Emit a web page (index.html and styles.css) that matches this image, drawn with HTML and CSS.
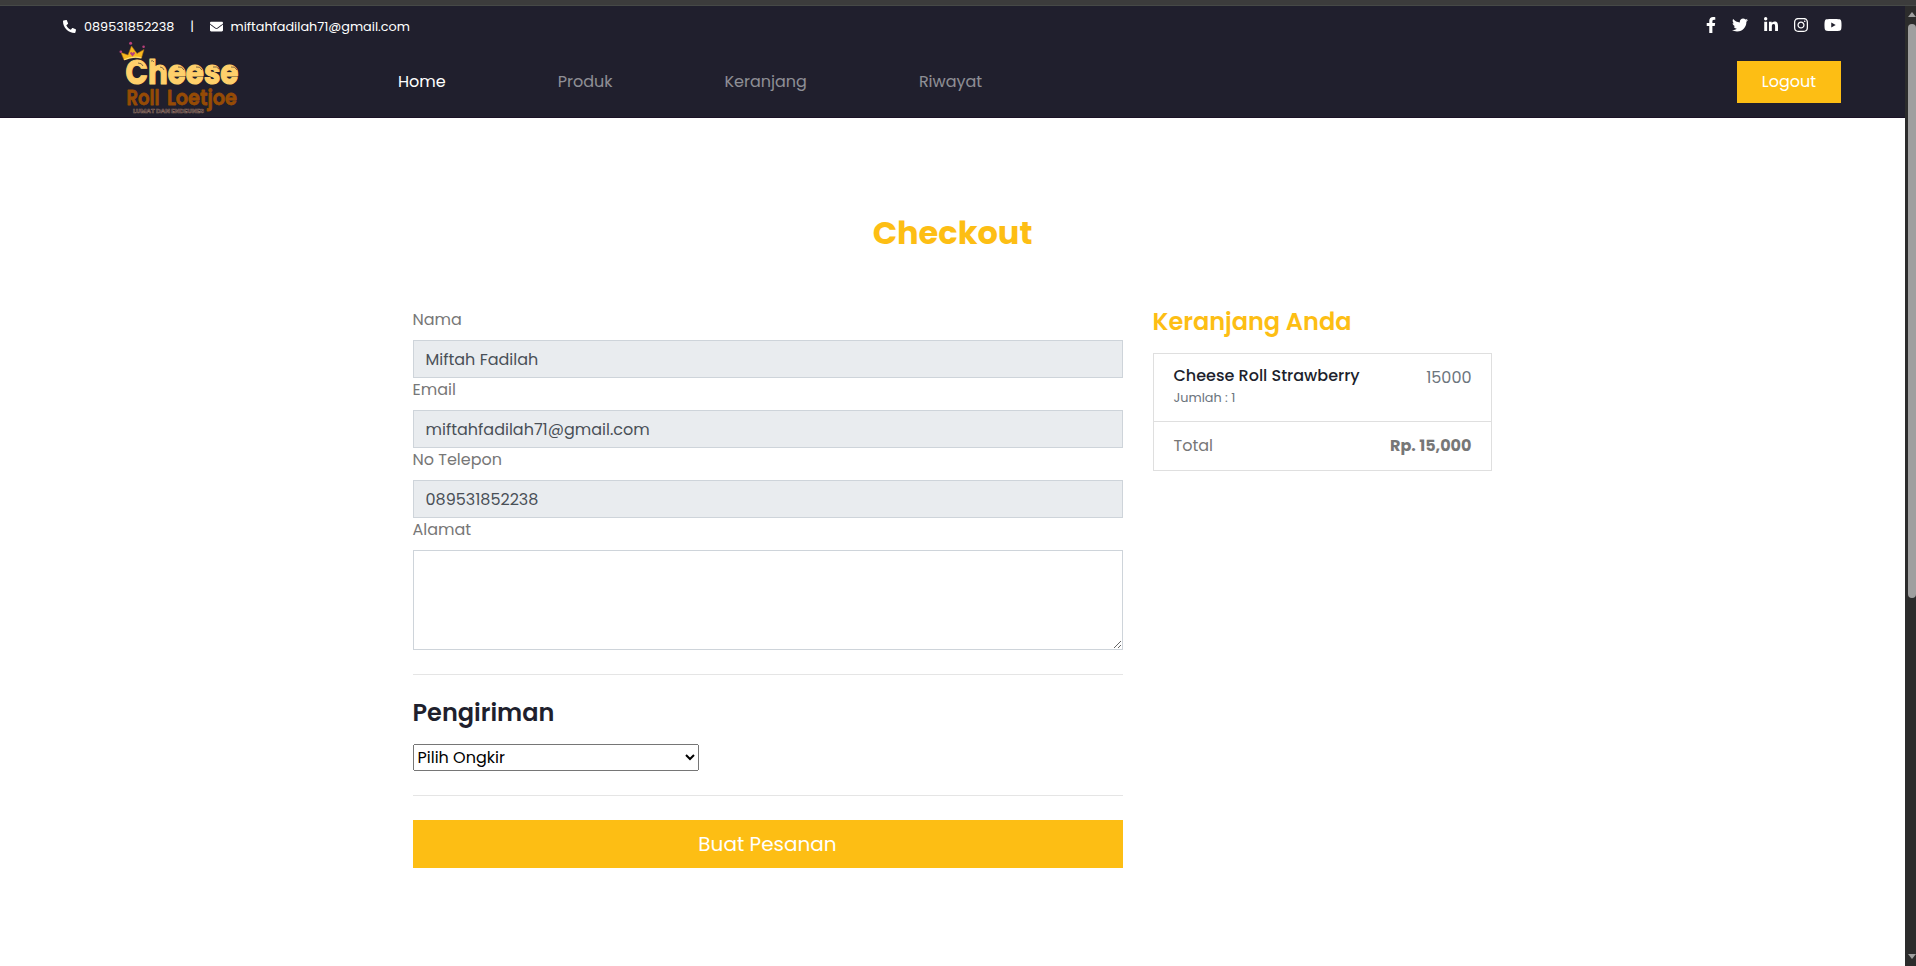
FILE: index.html
```html
<!DOCTYPE html>
<html lang="id">
<head>
<meta charset="utf-8">
<title>Checkout - Cheese Roll Loetjoe</title>
<link rel="stylesheet" href="styles.css">
</head>
<body>
<div class="window-edge"></div>
<div class="viewport">
  <div class="page">
    <header class="header">
      <div class="topbar">
        <div class="contact">
          <svg class="icon-sm" viewBox="0 0 512 512"><path d="M493.4 24.6l-104-24c-11.300-2.600-22.900 3.300-27.500 13.900l-48 112c-4.200 9.800-1.400 21.300 6.900 28l60.600 49.600c-36 76.700-98.900 140.500-177.200 177.200l-49.600-60.600c-6.800-8.300-18.200-11.100-28-6.900l-112 48C3.900 366.500-2 378.100.6 389.400l24 104C27.100 504.200 36.700 512 48 512c256.100 0 464-207.500 464-464 0-11.200-7.700-20.900-18.600-23.400z" transform="matrix(-1 0 0 1 512 0)"/></svg>
          <span>089531852238</span>
          <span class="divider">|</span>
          <svg class="icon-sm" viewBox="0 0 512 512"><path d="M502.300 190.800c3.900-3.100 9.700-.2 9.700 4.700V400c0 26.500-21.500 48-48 48H48c-26.500 0-48-21.500-48-48V195.600c0-5 5.700-7.800 9.700-4.700 22.400 17.400 52.100 39.500 154.100 113.600 21.100 15.400 56.700 47.800 92.200 47.600 35.700.3 72-32.800 92.300-47.600 102-74.100 131.600-96.300 154-113.700zM256 320c23.200.4 56.600-29.200 73.400-41.400 132.700-96.300 142.800-104.700 173.400-128.700 5.800-4.500 9.200-11.500 9.200-18.900v-19c0-26.500-21.500-48-48-48H48c-26.500 0-48 21.500-48 48v19c0 7.400 3.400 14.300 9.200 18.900 30.600 23.900 40.700 32.400 173.400 128.700 16.800 12.200 50.200 41.800 73.400 41.400z"/></svg>
          <span>miftahfadilah71@gmail.com</span>
        </div>
        <div class="social">
          <svg viewBox="0 0 320 512" width="10"><path d="M279.140 288l14.220-92.660h-88.910v-60.130c0-25.350 12.420-50.060 52.240-50.060h40.420V6.260S260.430 0 225.360 0c-73.220 0-121.080 44.380-121.080 124.720v70.620H22.890V288h81.390v224h100.170V288z"/></svg>
          <svg viewBox="0 0 512 512" width="16"><path d="M459.370 151.716c.325 4.548.325 9.097.325 13.645 0 138.720-105.583 298.558-298.558 298.558-59.452 0-114.680-17.219-161.137-47.106 8.447.974 16.568 1.299 25.340 1.299 49.055 0 94.213-16.568 130.274-44.832-46.132-.975-84.792-31.188-98.112-72.772 6.498.974 12.995 1.624 19.818 1.624 9.421 0 18.843-1.300 27.614-3.573-48.081-9.747-84.143-51.980-84.143-102.985v-1.299c13.969 7.797 30.214 12.670 47.431 13.319-28.264-18.843-46.781-51.005-46.781-87.391 0-19.492 5.197-37.360 14.294-52.954 51.655 63.675 129.300 105.258 216.365 109.807-1.624-7.797-2.599-15.918-2.599-24.040 0-57.828 46.782-104.934 104.934-104.934 30.213 0 57.502 12.670 76.670 33.137 23.715-4.548 46.456-13.320 66.599-25.340-7.798 24.366-24.366 44.833-46.132 57.827 21.117-2.273 41.584-8.122 60.426-16.243-14.292 20.791-32.161 39.308-52.628 54.253z"/></svg>
          <svg viewBox="0 0 448 512" width="14"><path d="M100.280 448H7.400V148.900h92.880zM53.790 108.100C24.090 108.100 0 83.500 0 53.800a53.790 53.790 0 0 1 107.580 0c0 29.700-24.100 54.300-53.790 54.300zM447.900 448h-92.680V302.400c0-34.700-.7-79.200-48.290-79.200-48.290 0-55.690 37.700-55.690 76.700V448h-92.780V148.900h89.080v40.800h1.300c12.400-23.500 42.690-48.300 87.880-48.300 94 0 111.280 61.900 111.280 142.300V448z"/></svg>
          <svg viewBox="0 0 448 512" width="14"><path d="M224.100 141c-63.600 0-114.900 51.300-114.900 114.900s51.300 114.900 114.900 114.900S339 319.500 339 255.900 287.700 141 224.100 141zm0 189.600c-41.100 0-74.700-33.500-74.700-74.700s33.500-74.700 74.700-74.700 74.700 33.500 74.700 74.700-33.600 74.700-74.700 74.700zm146.400-194.300c0 14.900-12 26.800-26.800 26.800-14.900 0-26.800-12-26.800-26.800s12-26.800 26.800-26.800 26.800 12 26.800 26.800zm76.100 27.200c-1.700-35.900-9.900-67.700-36.200-93.900-26.200-26.200-58-34.400-93.900-36.200-37-2.100-147.900-2.100-184.900 0-35.800 1.700-67.600 9.900-93.900 36.100s-34.400 58-36.200 93.900c-2.100 37-2.100 147.900 0 184.900 1.700 35.900 9.900 67.700 36.200 93.900s58 34.400 93.900 36.200c37 2.100 147.900 2.100 184.900 0 35.900-1.700 67.700-9.900 93.900-36.200 26.200-26.200 34.400-58 36.200-93.900 2.100-37 2.100-147.800 0-184.800zM398.800 388c-7.800 19.600-22.900 34.700-42.600 42.600-29.500 11.700-99.500 9-132.100 9s-102.700 2.600-132.100-9c-19.600-7.800-34.700-22.900-42.600-42.600-11.700-29.500-9-99.500-9-132.100s-2.600-102.700 9-132.100c7.800-19.600 22.900-34.700 42.600-42.600 29.500-11.700 99.500-9 132.100-9s102.700-2.600 132.100 9c19.600 7.800 34.700 22.900 42.600 42.600 11.700 29.500 9 99.500 9 132.100s2.700 102.700-9 132.100z"/></svg>
          <svg viewBox="0 0 576 512" width="18"><path d="M549.655 124.083c-6.281-23.650-24.787-42.276-48.284-48.597C458.781 64 288 64 288 64S117.220 64 74.629 75.486c-23.497 6.322-42.003 24.947-48.284 48.597-11.412 42.867-11.412 132.305-11.412 132.305s0 89.438 11.412 132.305c6.281 23.650 24.787 41.500 48.284 47.821C117.220 448 288 448 288 448s170.780 0 213.371-11.486c23.497-6.321 42.003-24.171 48.284-47.821 11.412-42.867 11.412-132.305 11.412-132.305s0-89.438-11.412-132.305zm-317.510 213.508V175.185l142.739 81.205-142.739 81.201z"/></svg>
        </div>
      </div>
      <nav class="navbar">
        <svg class="logo" viewBox="0 0 124 76">
          <text class="logo-cheese" x="6.500" y="43" textLength="113" lengthAdjust="spacingAndGlyphs">Cheese</text>
          <path class="logo-shine" d="M19 22q4 0 5 3M32 20q2-1 3 1M41 26q3 0 4 3M59 26q4-1 6 3M77 26q4-1 6 3M94 26q4-1 6 2M112 26q4-1 6 3"/>
          <text class="logo-roll" x="7.500" y="64" textLength="33" lengthAdjust="spacingAndGlyphs">Roll</text>
          <text class="logo-roll" x="48" y="64" textLength="70" lengthAdjust="spacingAndGlyphs">Loetjoe</text>
          <text class="logo-tag" x="14" y="72" textLength="71" lengthAdjust="spacingAndGlyphs">LUMAT DAN ENDEUNES</text>
          <path class="crown" d="M5 19L2 11.500L9 14L12.500 5L18 12.500L25 8.500L22.500 17Q13 15 5 19Z"/>
          <path class="crown-band" d="M5.200 18.700Q13 14.800 22.400 16.800"/>
          <path class="gem" d="M13.500 15.500L11 12.500Q12 10 13.500 12Q15.500 10 16 12.500Z"/>
          <g class="gem"><circle cx="1.800" cy="10.800" r="1.300"/><circle cx="11.600" cy="2.200" r="1.500"/><circle cx="24.600" cy="5.800" r="1.300"/></g>
        </svg>
        <div class="nav-links">
          <a class="nav-link active">Home</a>
          <a class="nav-link">Produk</a>
          <a class="nav-link">Keranjang</a>
          <a class="nav-link">Riwayat</a>
        </div>
        <a class="logout">Logout</a>
      </nav>
    </header>

    <main class="container">
      <h2 class="title">Checkout</h2>
      <div class="columns">
        <form class="form">
          <label class="label">Nama</label>
          <input class="control" type="text" value="Miftah Fadilah" readonly>
          <label class="label">Email</label>
          <input class="control" type="text" value="miftahfadilah71@gmail.com" readonly>
          <label class="label">No Telepon</label>
          <input class="control" type="text" value="089531852238" readonly>
          <label class="label">Alamat</label>
          <textarea class="control area"></textarea>
          <hr class="rule">
          <h4 class="heading">Pengiriman</h4>
          <select class="select"><option>Pilih Ongkir</option></select>
          <hr class="rule">
          <button class="submit" type="button">Buat Pesanan</button>
        </form>
        <aside class="cart">
          <h4 class="heading gold">Keranjang Anda</h4>
          <ul class="list">
            <li class="item">
              <div>
                <h6 class="product">Cheese Roll Strawberry</h6>
                <small class="muted qty">Jumlah : 1</small>
              </div>
              <span class="muted">15000</span>
            </li>
            <li class="item">
              <span>Total</span>
              <strong>Rp. 15,000</strong>
            </li>
          </ul>
        </aside>
      </div>
    </main>
  </div>
  <div class="scrollbar">
    <svg width="8" height="5" viewBox="0 0 8 5"><path d="M4 0L8 5H0Z"/></svg>
    <div class="thumb"></div>
    <svg width="8" height="5" viewBox="0 0 8 5"><path d="M0 0H8L4 5Z"/></svg>
  </div>
</div>
</body>
</html>
```

FILE: styles.css
```css
*, *::before, *::after { box-sizing: border-box; }

body {
  margin: 0;
  height: 966px;
  overflow: hidden;
  font: 400 16px/1.5 Poppins, Inter, sans-serif;
  color: #777;
  background: #fff;
}

h2, h4, h6, ul { margin: 0; padding: 0; }

.window-edge { height: 6px; background: #3c3c3c; border-bottom: 1px solid #464947; }
.viewport { display: flex; height: 960px; }
.page { flex: 1; }

.header {
  height: 112px;
  background: #201f2d;
  border-bottom: 1px solid #1b1226;
  color: #fff;
}
.topbar {
  display: flex;
  justify-content: space-between;
  align-items: center;
  height: 31px;
  padding: 9px 63px 0;
}
.topbar svg { fill: #fff; display: block; }
.contact { display: flex; align-items: center; font-size: 12.8px; line-height: 19px; }
.icon-sm { width: 13px; height: 13px; margin-right: 8px; }
.divider { margin: 0 15.5px 0 16px; }
.social { display: flex; gap: 16px; margin-top: -2px; }
.social svg { height: 16px; }

.navbar { display: flex; align-items: center; height: 80px; padding: 0 64px 0 119px; }
.logo { width: 124px; height: 76px; margin-top: 4px; overflow: visible; }
.nav-links { display: flex; gap: 112px; margin-left: 155px; margin-top: 10px; }
.nav-link { color: rgba(255, 255, 255, .5); }
.nav-link.active { color: #fff; }
.logout {
  width: 104px;
  height: 42px;
  margin: 10px 0 0 auto;
  background: #fdbe14;
  text-align: center;
  line-height: 42px;
}

.logo-cheese { font: 700 33px/1 Poppins, sans-serif; fill: #ffd06b; stroke: #ffd06b; stroke-width: 1.1; stroke-linejoin: round; }
.logo-shine { fill: none; stroke: #4a3a35; stroke-width: .7; }
.logo-roll { font: 600 21.5px/1 Poppins, sans-serif; fill: #964b05; stroke: #964b05; stroke-width: .8; stroke-linejoin: round; }
.logo-tag { font: 700 5.5px/1 Poppins, sans-serif; fill: #201f2d; stroke: #8b6c60; stroke-width: .5; }
.crown { fill: #f8b91e; stroke: #a86a14; stroke-width: .6; }
.crown-band { fill: none; stroke: #ffe27a; stroke-width: 1.2; }
.gem { fill: #b8407c; }

.container { width: 1110px; margin: 0 auto; padding: 0 15px 0; }
.title {
  padding-top: 96px;
  font-size: 32px;
  font-weight: 700;
  line-height: 38.4px;
  text-align: center;
  color: #fdbe14;
}
.columns { display: flex; gap: 30px; margin-top: 55.6px; }
.form { width: 710px; flex: none; }
.cart { width: 339.4px; flex: none; }

.label { display: block; margin-bottom: 8px; }
.control {
  display: block;
  width: 100%;
  height: 38px;
  padding: 6px 12px;
  border: 1px solid #ced4da;
  border-radius: 0;
  background: #e9ecef;
  color: #495057;
  font: inherit;
}
.area { height: 100px; background: #fff; }
.rule { height: 0; margin: 24px 0; border: 0; border-top: 1px solid #e5e5e5; }
.heading { margin-bottom: 16px; font-size: 24px; font-weight: 600; line-height: 1.2; color: #201f2d; }
.gold { color: #fdbe14; }
.select { display: block; width: 286px; height: 27px; font: inherit; color: #000; }
.submit {
  display: block;
  width: 100%;
  height: 48px;
  border: 0;
  background: #fdbe14;
  color: #fff;
  font: 400 20px/30px Poppins, sans-serif;
}

.list { list-style: none; }
.item {
  display: flex;
  justify-content: space-between;
  margin-bottom: -1px;
  padding: 12px 19.4px 12px 20px;
  border: 1px solid #dfdfdf;
}
.product { font-size: 16px; font-weight: 500; line-height: 1.2; color: #201f2d; }
.muted { color: #6c757d; }
.qty { font-size: 12.8px; }

.scrollbar {
  display: flex;
  flex-direction: column;
  align-items: flex-end;
  width: 11px;
  padding: 6px 0 7px;
  background: #2c2c2c;
}
.scrollbar svg { fill: #9f9f9f; }
.thumb { width: 8px; height: 574px; margin: 7px 0 auto; border-radius: 4px; background: #9f9f9f; }
```
